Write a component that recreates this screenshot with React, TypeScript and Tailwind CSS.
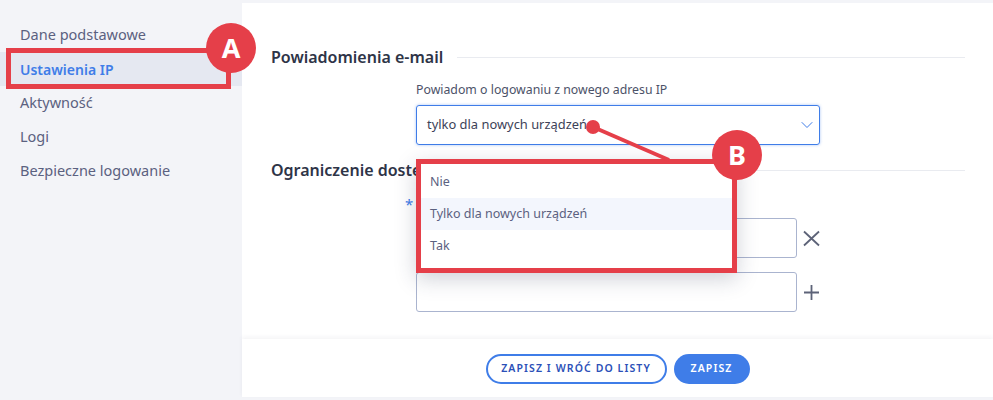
import { ChevronDown } from "lucide-react";

const font = "font-['Noto_Sans',sans-serif]";

function NavItem({ label, active }: { label: string; active?: boolean }) {
  return (
    <div
      className={
        active
          ? "h-[34px] pl-5 flex items-center text-[14px] font-semibold text-[#3f7de8] bg-[#e5e8f1]"
          : "h-[34px] pl-5 flex items-center text-[14.5px] text-[#5b6180]"
      }
    >
      {label}
    </div>
  );
}

function SectionTitle({ label }: { label: string }) {
  return (
    <div className="flex items-center gap-[14px] h-6">
      <span className="text-[16px] font-semibold text-[#2e3447] whitespace-nowrap">{label}</span>
      <div className="flex-1 h-px bg-[#e9ebf0]" />
    </div>
  );
}

function Badge({ letter, className }: { letter: string; className: string }) {
  return (
    <div
      className={
        "absolute w-[50px] h-[50px] rounded-full bg-[#e53f49] text-white text-[27px] font-bold flex items-center justify-center " +
        className
      }
    >
      {letter}
    </div>
  );
}

function IpRow({ icon }: { icon: "remove" | "add" }) {
  return (
    <div className="flex items-center gap-[6px]">
      <div className="w-[381px] h-[40px] rounded-[3px] border border-[#aab4cf]" />
      <svg width="17" height="17" viewBox="0 0 17 17" stroke="#5d6378" strokeWidth="1.8" fill="none">
        {icon === "remove" ? (
          <path d="M1 1.5 16 15.5M16 1.5 1 15.5" />
        ) : (
          <path d="M8.5 1V16M1 8.5H16" />
        )}
      </svg>
    </div>
  );
}

export default function App() {
  return (
    <div className={"relative w-[993px] h-[400px] overflow-hidden bg-[#f3f4f8] flex " + font}>
      <aside className="w-[242px] shrink-0 pt-[18px]">
        <NavItem label="Dane podstawowe" />
        <NavItem label="Ustawienia IP" active />
        <NavItem label="Aktywność" />
        <NavItem label="Logi" />
        <NavItem label="Bezpieczne logowanie" />
      </aside>

      <main className="flex-1 mt-[3px] mb-[3px] bg-white flex flex-col">
        <div className="flex-1 pl-[29px] pr-[28px] pt-[42px]">
          <SectionTitle label="Powiadomienia e-mail" />
          <div className="ml-[145px] w-[404px] mt-[11px]">
            <div className="text-[12.3px] text-[#4c5268] h-[20px] leading-[20px]">
              Powiadom o logowaniu z nowego adresu IP
            </div>
            <div className="mt-[5px] h-[40px] rounded-[3px] border border-[#3f7de8] shadow-[0_0_3px_rgba(63,125,232,0.45)] flex items-center justify-between pl-[10px] pr-[2px]">
              <span className="text-[12.9px] text-[#3d4258]">tylko dla nowych urządzeń</span>
              <ChevronDown className="w-5 h-5 text-[#3f7de8]" strokeWidth={1.2} />
            </div>
          </div>
          <div className="mt-[13px]">
            <SectionTitle label="Ograniczenie dostępu" />
          </div>
          <div className="ml-[145px] mt-[36px] flex flex-col gap-[14px]">
            <IpRow icon="remove" />
            <IpRow icon="add" />
          </div>
        </div>
        <footer className="h-[58px] pt-[1px] flex items-center justify-center gap-[7px] shadow-[0_-2px_4px_rgba(60,70,100,0.06)]">
          <button className="h-[30px] w-[181px] rounded-full border-2 border-[#3f7de8] text-[10.5px] font-semibold tracking-[1.1px] text-[#2b50b8] bg-white">
            ZAPISZ I WRÓĆ DO LISTY
          </button>
          <button className="h-[30px] w-[76px] rounded-full bg-[#3f7de8] text-[10.5px] font-semibold tracking-[1.1px] text-white">
            ZAPISZ
          </button>
        </footer>
      </main>

      {/* required star next to the covered label */}
      <span className="absolute left-[405px] top-[193px] text-[15px] text-[#3f7de8]">*</span>

      {/* menu arrow */}
      <div className="absolute left-[425px] top-[155px] w-[10px] h-[10px] rotate-45 bg-white" />

      {/* open select menu, with the red annotation frame */}
      <div className="absolute left-[416px] top-[159px] w-[321px] h-[114px] border-[5px] border-[#e53f49] bg-white shadow-[0_6px_20px_rgba(40,50,80,0.22)] pt-[2px]">
        <div className="h-[32px] pl-[9px] pt-[1px] flex items-center text-[12.5px] text-[#5b6180]">Nie</div>
        <div className="h-[32px] pl-[9px] pt-[1px] flex items-center text-[12.5px] text-[#5b6180] bg-[#f3f6fd]">
          Tylko dla nowych urządzeń
        </div>
        <div className="h-[32px] pl-[9px] pt-[1px] flex items-center text-[12.5px] text-[#5b6180]">Tak</div>
      </div>

      {/* annotations */}
      <div className="absolute left-[6px] top-[48px] w-[225px] h-[41px] border-[5px] border-[#e53f49]" />
      <Badge letter="A" className="left-[206px] top-[23px]" />
      <svg className="absolute left-0 top-0 pointer-events-none" width="993" height="400">
        <circle cx="593" cy="127" r="7" fill="#e53f49" />
        <line x1="593" y1="127" x2="669" y2="160" stroke="#e53f49" strokeWidth="4" />
      </svg>
      <Badge letter="B" className="left-[712px] top-[130px]" />
    </div>
  );
}
